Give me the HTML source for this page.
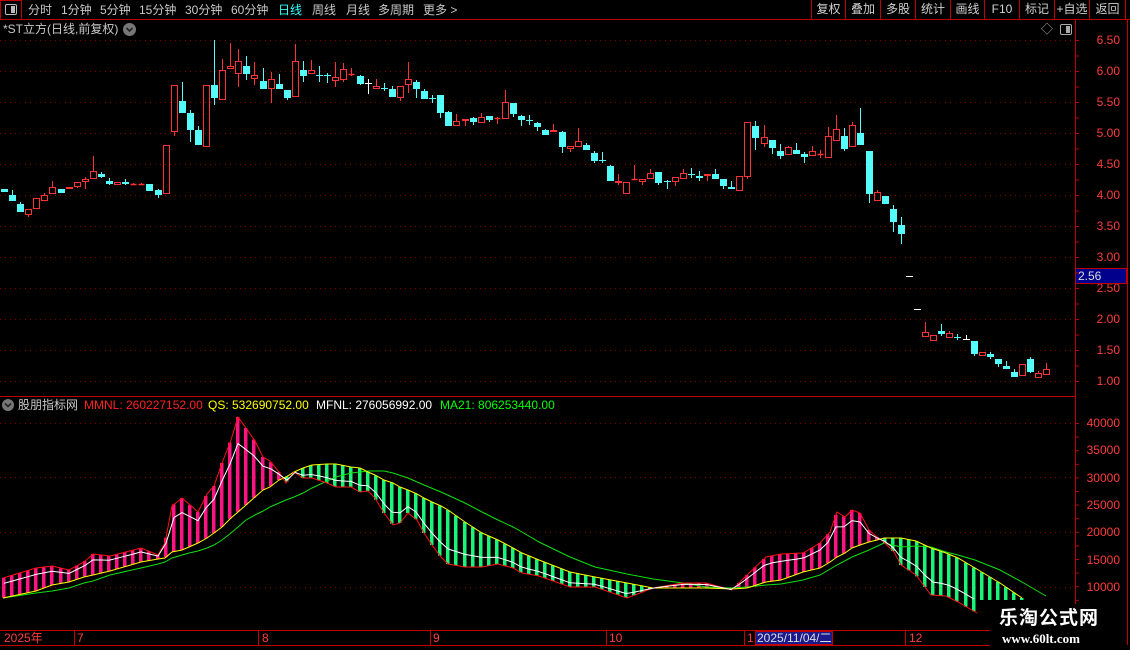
<!DOCTYPE html>
<html><head><meta charset="utf-8">
<style>
*{margin:0;padding:0;box-sizing:border-box}
body{width:1130px;height:650px;background:#000;overflow:hidden;position:relative;font-family:"Liberation Sans","Noto Sans CJK SC",sans-serif;font-size:12px;color:#c8c8c8}
.a{position:absolute;white-space:nowrap;line-height:14px}
.btn{position:absolute;top:0;height:19px;border-left:1px solid #c00000;color:#d0d0d0;font-size:12px;line-height:19px;text-align:center}
.r{color:#ff3c3c;text-align:right;width:50px}
</style></head><body>
<div style="position:absolute;left:0;top:0;width:22px;height:20px;border:1px solid #c00000"></div>
<div style="position:absolute;left:5px;top:4px;width:12px;height:11px;border:1px solid #bbb;border-radius:2px"><div style="position:absolute;right:1px;top:1px;width:4px;height:7px;background:#bbb"></div></div>
<div style="position:absolute;left:0;top:19px;width:1130px;height:1px;background:#c00000"></div>
<div class="a" style="left:28px;top:3px">分时</div>
<div class="a" style="left:61px;top:3px">1分钟</div>
<div class="a" style="left:100px;top:3px">5分钟</div>
<div class="a" style="left:139px;top:3px">15分钟</div>
<div class="a" style="left:185px;top:3px">30分钟</div>
<div class="a" style="left:231px;top:3px">60分钟</div>
<div class="a" style="left:278px;top:3px;color:#3ff">日线</div>
<div class="a" style="left:312px;top:3px">周线</div>
<div class="a" style="left:346px;top:3px">月线</div>
<div class="a" style="left:378px;top:3px">多周期</div>
<div class="a" style="left:423px;top:3px">更多 &gt;</div>
<div class="btn" style="left:811px;width:34px">复权</div>
<div class="btn" style="left:845px;width:35px">叠加</div>
<div class="btn" style="left:880px;width:35px">多股</div>
<div class="btn" style="left:915px;width:35px">统计</div>
<div class="btn" style="left:950px;width:34px">画线</div>
<div class="btn" style="left:984px;width:35px">F10</div>
<div class="btn" style="left:1019px;width:35px">标记</div>
<div class="btn" style="left:1054px;width:35px">+自选</div>
<div class="btn" style="left:1089px;width:37px;border-right:1px solid #c00000">返回</div>
<div class="a" style="left:3px;top:22px;color:#c8c8c8">*ST立方(日线,前复权)</div>
<svg style="position:absolute;left:123px;top:23px" width="13" height="13"><circle cx="6.5" cy="6.5" r="6.5" fill="#777"/><path d="M3.5 5 L6.5 8 L9.5 5" stroke="#222" stroke-width="1.6" fill="none"/></svg>
<div class="a" style="left:1041px;top:22px;color:#aaa;font-size:12px">◇</div>
<div style="position:absolute;left:1060px;top:24px;width:12px;height:11px;border:1px solid #aaa;border-radius:2px"><div style="position:absolute;right:1px;top:1px;width:4px;height:7px;background:#aaa"></div></div>
<div style="position:absolute;left:0;top:396px;width:1075px;height:1px;background:#c00000"></div>
<svg style="position:absolute;left:2px;top:399px" width="12" height="12"><circle cx="6" cy="6" r="6" fill="#777"/><path d="M3 4.5 L6 7.5 L9 4.5" stroke="#222" stroke-width="1.6" fill="none"/></svg>
<div class="a" style="left:18px;top:398px">股朋指标网</div>
<div class="a" style="left:84px;top:398px;color:#ff2020">MMNL: 260227152.00</div>
<div class="a" style="left:208px;top:398px;color:#ffff00">QS: 532690752.00</div>
<div class="a" style="left:316px;top:398px;color:#fff">MFNL: 276056992.00</div>
<div class="a" style="left:440px;top:398px;color:#00ff00">MA21: 806253440.00</div>
<div class="a r" style="left:1070px;top:33px">6.50</div>
<div class="a r" style="left:1070px;top:64px">6.00</div>
<div class="a r" style="left:1070px;top:95px">5.50</div>
<div class="a r" style="left:1070px;top:126px">5.00</div>
<div class="a r" style="left:1070px;top:157px">4.50</div>
<div class="a r" style="left:1070px;top:188px">4.00</div>
<div class="a r" style="left:1070px;top:219px">3.50</div>
<div class="a r" style="left:1070px;top:250px">3.00</div>
<div class="a r" style="left:1070px;top:281px">2.50</div>
<div class="a r" style="left:1070px;top:312px">2.00</div>
<div class="a r" style="left:1070px;top:343px">1.50</div>
<div class="a r" style="left:1070px;top:374px">1.00</div>
<div style="position:absolute;left:1075px;top:268px;width:52px;height:16px;background:#00008c;border:1px solid #c00000;color:#ddd;line-height:14px;padding-left:2px">2.56</div>
<div class="a r" style="left:1070px;top:416px">40000</div>
<div class="a r" style="left:1070px;top:443px">35000</div>
<div class="a r" style="left:1070px;top:471px">30000</div>
<div class="a r" style="left:1070px;top:498px">25000</div>
<div class="a r" style="left:1070px;top:525px">20000</div>
<div class="a r" style="left:1070px;top:553px">15000</div>
<div class="a r" style="left:1070px;top:580px">10000</div>
<div style="position:absolute;left:0;top:630px;width:1075px;height:1px;background:#c00000"></div>
<div style="position:absolute;left:0;top:645px;width:1000px;height:1px;background:#c00000"></div>
<div class="a" style="left:4px;top:631px;color:#ff3c3c">2025年</div>
<div class="a" style="left:77px;top:631px;color:#ff3c3c">7</div>
<div class="a" style="left:262px;top:631px;color:#ff3c3c">8</div>
<div class="a" style="left:433px;top:631px;color:#ff3c3c">9</div>
<div class="a" style="left:609px;top:631px;color:#ff3c3c">10</div>
<div class="a" style="left:747px;top:631px;color:#ff3c3c">1</div>
<div style="position:absolute;left:755px;top:631px;width:78px;height:14px;background:#1a1a8c;border:1px solid #c00000;color:#ddd;line-height:12px;padding-left:1px">2025/11/04/二</div>
<div class="a" style="left:909px;top:631px;color:#ff3c3c">12</div>
<svg id="s" width="1130" height="650" style="position:absolute;left:0;top:0" xmlns="http://www.w3.org/2000/svg"></svg>
<div style="position:absolute;left:990px;top:604px;width:125px;height:46px;background:#000"></div>
<div class="a" style="left:999px;top:606px;color:#fff;font-size:19px;line-height:22px;font-weight:bold;font-family:'Noto Sans CJK SC',sans-serif;letter-spacing:1px">乐淘公式网</div>
<div class="a" style="left:1002px;top:632px;color:#fff;font-size:13px;font-weight:bold;font-family:'Liberation Serif',serif">www.60lt.com</div>
<script>
var s=document.getElementById('s'),h='';
function L(x1,y1,x2,y2,c,w,d){h+='<line x1="'+x1+'" y1="'+y1+'" x2="'+x2+'" y2="'+y2+'" stroke="'+c+'" stroke-width="'+(w||1)+'"'+(d?' stroke-dasharray="'+d+'"':'')+'/>';}
[40,71,102,133,164,195,226,257,288,319,350,381].forEach(function(y){L(0,y+.5,1075,y+.5,'#7a0000',1,'1,4');});
[423,477,532,587].forEach(function(y){L(0,y+.5,1075,y+.5,'#7a0000',1,'1,4');});
L(1075.5,20,1075.5,630,'#c00000');L(1127.5,20,1127.5,645,'#c00000');
for(var y=40;y<390;y+=15.5)L(1075,y+.5,1079,y+.5,'#c00000');
for(var y=423;y<600;y+=13.6)L(1075,y+.5,1079,y+.5,'#c00000');
[74,258,430,606,744,905].forEach(function(x){L(x+.5,630,x+.5,645,'#c00000');});
var D="d 189 192;d 195 201 190;d 204 212 202;u 209 215 - 217;u 198 209;u 195 201 193;u 187 194 181;d 189 193;u 187 189;u 182 187 - 188;u 179 182 177 189;u 171 179 156;d 174 177 172 178;d 181 184 178 185;u 182 185;d 182 184 179 185;u 184 185 183;u 184 185 183;d 184 191;d 190 195 189 198;u 145 194;u 85 132 - 136;d 101 113 82;d 113 130 110 142;d 130 145 126;u 85 147;d 85 98 40 105;u 70 100 59;u 66 69 43;u 61 74 49 87;d 66 74 56 80;u 75 79 62 85;d 81 89 68;u 79 89 72 103;d 84 89 74;d 90 98 - 100;u 61 97 44;d 70 76 61 82;u 70 74 60;d 75 76 66 82;d 75 76 73 83;u 77 81 62 87;u 69 80 63 82;u 74 75 68 76;d 76 84 75 85;w 83 84 79 94;u 86 89 79;d 88 89 83 91;d 89 97 86;u 86 98 - 101;u 79 85 62 93;d 82 89 80 98;d 91 99 89;d 98 99 95 103;d 95 113 - 118;d 112 126 111;u 121 126 114;u 119 121 - 126;d 118 122 117 125;u 117 123 113;d 116 120 - 122;u 118 119 117 124;u 102 119 90;d 103 114 - 117;d 116 120 115 126;d 120 121 115 125;d 123 127 122 131;d 130 135 129;u 130 132 124;d 132 147 131 153;u 146 149 - 152;u 141 147 128;d 145 150 143;d 153 161 151 163;d 160 161 152 163;d 166 181 165;u 181 183 174 185;u 182 194;u 179 180 165;u 179 182 - 185;u 173 179 169;d 172 183 - 185;d 181 182 180 189;u 177 182 - 186;u 173 179 169;d 174 175 168 178;d 176 178 171 181;u 174 176 - 181;d 174 179 169;d 179 186 - 189;d 187 189 181;u 176 191;u 122 177 - 179;d 126 138 121 150;u 137 144 125 147;d 140 148 - 154;d 151 156 144 159;u 147 155 146;d 150 154 143;d 154 157 152 163;u 151 156 146;u 154 155 150 158;u 136 158 127;u 129 141 115;d 136 149 128 151;u 125 147 122;d 133 145 108;d 151 194 - 203;u 192 201 190;d 196 204;d 209 222 205 232;d 225 234 217 244;w 276 277;w 309 310;u 332 337 322;u 335 341;d 331 334 324 336;u 333 338 331;d 337 338 334 340;w 339 340 335;d 341 354 - 356;u 352 356;d 354 357 352 359;d 359 364 - 367;d 366 369 361;d 372 377 369;u 364 376;d 359 372 357 373;u 373 378 371;u 369 375 363".split(';');
D.forEach(function(r,i){var p=r.split(' '),t=p[0],a=+p[1],b=+p[2],hi=(p[3]&&p[3]!='-')?+p[3]:a,lo=p[4]?+p[4]:b;
var x=Math.round(4+8.08*i)+.5,c=t=='u'?'#ff3333':(t=='w'?'#ffffff':'#54fcfc');
if(hi<a)L(x,hi,x,a,c);if(lo>b)L(x,b,x,lo,c);
if(t=='u'){if(b-a<2)L(x-3,a+.5,x+3,a+.5,c,1.5);else h+='<rect x="'+(x-3)+'" y="'+(a+.5)+'" width="6" height="'+(b-a-1)+'" fill="none" stroke="'+c+'"/>';}
else h+='<rect x="'+(x-3.5)+'" y="'+a+'" width="7" height="'+Math.max(1,b-a)+'" fill="'+c+'"/>';});
var R=[[3,578],[36,568],[52,566],[69,570],[84,562],[93,554],[110,556],[141,548],[158,555],[165,543],[172,506],[182,498],[189,504],[198,512],[207,494],[214,486],[222,463],[231,440],[238,417],[246,428],[255,441],[263,457],[270,461],[279,472],[286,483],[294,472],[303,478],[312,478],[327,483],[336,487],[351,487],[360,492],[368,491],[375,498],[384,513],[393,525],[400,523],[408,513],[417,520],[424,533],[432,545],[441,557],[448,564],[465,567],[482,567],[498,564],[513,568],[522,573],[539,576],[570,587],[595,587],[627,598],[653,588],[683,583],[706,583],[732,590],[747,575],[766,557],[781,554],[803,553],[820,543],[830,532],[837,512],[845,517],[852,510],[860,513],[869,530],[877,537],[884,542],[894,552],[901,565],[916,575],[931,595],[946,596],[958,602],[977,613]];
var Y=[[3,598],[36,591],[52,585],[69,582],[84,577],[93,575],[110,571],[141,562],[158,559],[165,558],[172,552],[182,550],[189,547],[198,543],[207,538],[214,533],[222,527],[231,518],[238,512],[246,505],[255,497],[263,490],[270,487],[279,480],[286,477],[294,472],[303,468],[312,465],[327,464],[336,464],[351,467],[360,468],[368,472],[375,475],[384,480],[393,483],[400,487],[408,490],[417,494],[424,498],[432,502],[441,506],[448,510],[465,522],[482,533],[498,540],[513,548],[522,553],[539,560],[570,572],[595,577],[627,583],[653,588],[683,588],[706,588],[732,589],[747,588],[766,582],[781,580],[803,572],[820,568],[830,562],[837,557],[845,553],[852,548],[860,545],[869,542],[877,540],[884,538],[894,538],[901,538],[916,541],[931,548],[946,553],[958,558],[975,568],[1000,583],[1022,598]];
var G=[[3,598],[36,593],[52,591],[69,588],[84,583],[93,581],[110,575],[141,568],[158,564],[165,562],[172,558],[182,555],[189,553],[198,551],[207,548],[214,545],[222,540],[231,533],[238,527],[246,520],[255,515],[263,511],[270,507],[279,503],[286,500],[294,497],[303,493],[312,488],[327,481],[336,477],[351,473],[360,472],[368,471],[384,471],[393,473],[408,478],[424,485],[441,492],[465,503],[482,512],[498,520],[513,527],[522,532],[539,542],[570,557],[595,567],[627,574],[653,579],[683,583],[706,587],[732,588],[747,587],[766,585],[781,584],[803,580],[820,575],[837,565],[852,557],[869,550],[884,543],[901,547],[916,546],[931,547],[946,552],[958,555],[975,560],[1000,570],[1022,582],[1046,596]];
function I(A,x){if(x<A[0][0]||x>A[A.length-1][0])return null;for(var k=1;k<A.length;k++)if(x<=A[k][0]){var a=A[k-1],b=A[k];return a[1]+(b[1]-a[1])*(x-a[0])/(b[0]-a[0]);}return null;}
var W=[];
for(var i=0;i<130;i++){var x=Math.round(4+8.08*i),r=I(R,x),y=I(Y,x);if(y===null)continue;
 if(r!==null){var c=r<y?'#ff1483':'#1af57a';h+='<rect x="'+(x-2)+'" y="'+Math.min(r,y)+'" width="3.5" height="'+Math.max(1,Math.abs(r-y))+'" fill="'+c+'"/>';W.push([x,0.72*r+0.28*y]);}
 else h+='<rect x="'+(x-2)+'" y="'+y+'" width="3.5" height="'+Math.max(1,600-y)+'" fill="#1af57a"/>';}
function P(A,c){h+='<polyline fill="none" stroke="'+c+'" stroke-width="1" points="'+A.map(function(p){return p[0]+','+p[1].toFixed(1)}).join(' ')+'"/>';}
P(G,'#10e010');P(Y,'#ffff00');P(R,'#ff1010');P(W,'#ffffff');
s.innerHTML=h;
</script>
</body></html>
